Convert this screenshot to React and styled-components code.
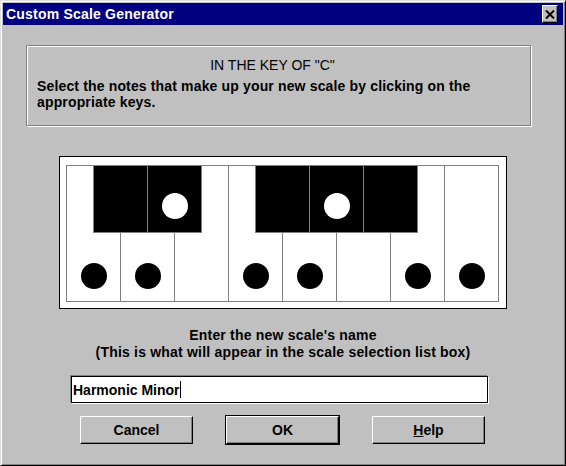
import React from 'react'
import styled, { createGlobalStyle } from 'styled-components'

const GlobalStyle = createGlobalStyle`
  html, body {
    margin: 0;
    padding: 0;
    background: #c0c0c0;
  }
  body {
    font-family: "Liberation Sans", Arial, sans-serif;
  }
`

const Window = styled.div`
  width: 566px;
  height: 466px;
  box-sizing: border-box;
  background: #c0c0c0;
  border: 1px solid;
  border-color: #dfdfdf #000 #000 #dfdfdf;
  box-shadow: inset 1px 1px #fff, inset -1px -1px #808080;
  padding: 2px;
  display: flex;
  flex-direction: column;
`

const TitleBar = styled.div`
  height: 22px;
  background: #000080;
  display: flex;
  align-items: center;
  justify-content: space-between;
  padding: 0 5px 0 3px;
`

const Title = styled.span`
  color: #fff;
  font-weight: bold;
  font-size: 14px;
  letter-spacing: 0.2px;
`

const CloseButton = styled.div`
  width: 16px;
  height: 18px;
  box-sizing: border-box;
  background: #c0c0c0;
  border: 1px solid;
  border-color: #fff #000 #000 #fff;
  box-shadow: inset -1px -1px #808080;
  display: flex;
  align-items: center;
  justify-content: center;
`

const Body = styled.div`
  display: flex;
  flex-direction: column;
  align-items: flex-start;
`

const InfoPanel = styled.div`
  margin: 20px 0 0 23px;
  width: 505px;
  height: 81px;
  box-sizing: border-box;
  border: 1px solid #808080;
  box-shadow: 1px 1px 0 #fff, inset 1px 1px 0 #fff;
  padding: 11px 10px 0;
  font-size: 14px;
  line-height: 16px;
  color: #000;
`

const PanelHeading = styled.div`
  text-align: center;
  margin: 0 12px 5px 0;
`

const PanelText = styled.div`
  font-weight: bold;
  letter-spacing: 0.15px;
`

const KeyboardFrame = styled.div`
  margin: 30px 0 0 56px;
  width: 448px;
  height: 153px;
  box-sizing: border-box;
  border: 1px solid #000;
  background: #fff;
  padding: 8px 0 0 6px;
`

const Keyboard = styled.div`
  position: relative;
  width: 433px;
  height: 137px;
  box-sizing: border-box;
  border: 1px solid #808080;
  background: #808080;
  display: grid;
  grid-template-columns: repeat(8, 1fr);
  gap: 1px;
`

const WhiteKey = styled.div`
  background: #fff;
  display: flex;
  align-items: flex-end;
  justify-content: center;
  padding-bottom: 12px;
`

const BlackKey = styled.div`
  position: absolute;
  top: -1px;
  width: 55px;
  height: 68px;
  box-sizing: border-box;
  background: #000;
  border: 1px solid #808080;
  display: flex;
  align-items: flex-end;
  justify-content: center;
  padding-bottom: 13px;
`

const Dot = styled.div`
  width: 26px;
  height: 26px;
  border-radius: 50%;
  background: ${(p) => (p.$light ? '#fff' : '#000')};
`

const Prompt = styled.div`
  align-self: center;
  margin-top: 18px;
  text-align: center;
  font-weight: bold;
  font-size: 14px;
  line-height: 17px;
  letter-spacing: 0.2px;
`

const NameField = styled.div`
  margin: 15px 0 0 68px;
  width: 417px;
  height: 27px;
  box-sizing: border-box;
  background: #fff;
  border: 1px solid #000;
  box-shadow: -1px -1px 0 #808080, 1px 1px 0 #fff;
  display: flex;
  align-items: center;
  padding-left: 1px;
  font-weight: bold;
  font-size: 14px;
`

const Caret = styled.span`
  display: inline-block;
  width: 1px;
  height: 17px;
  background: #000;
`

const ButtonRow = styled.div`
  margin: 13px 0 0 77px;
  display: flex;
  gap: 33px;
`

const Button = styled.div`
  width: 113px;
  height: 28px;
  box-sizing: border-box;
  background: #c0c0c0;
  border: 1px solid;
  border-color: #fff #000 #000 #fff;
  box-shadow: ${(p) =>
    p.$default
      ? 'inset -1px -1px #808080, 0 0 0 1px #000'
      : 'inset -1px -1px #808080'};
  display: flex;
  align-items: center;
  justify-content: center;
  font-weight: bold;
  font-size: 14px;
  u {
    text-decoration: underline;
  }
`

const whiteDots = [true, true, false, true, true, false, true, true]
const blackKeys = [
  { pos: 0, note: false },
  { pos: 1, note: true },
  { pos: 3, note: false },
  { pos: 4, note: true },
  { pos: 5, note: false },
]

export default function App() {
  return (
    <>
      <GlobalStyle />
      <Window>
        <TitleBar>
          <Title>Custom Scale Generator</Title>
          <CloseButton>
            <svg width="10" height="9" viewBox="0 0 10 9">
              <path d="M1 0.5 L9 8.5 M9 0.5 L1 8.5" stroke="#000" strokeWidth="2" />
            </svg>
          </CloseButton>
        </TitleBar>
        <Body>
          <InfoPanel>
            <PanelHeading>IN THE KEY OF "C"</PanelHeading>
            <PanelText>
              Select the notes that make up your new scale by clicking on the
              appropriate keys.
            </PanelText>
          </InfoPanel>
          <KeyboardFrame>
            <Keyboard>
              {whiteDots.map((on, i) => (
                <WhiteKey key={i}>{on && <Dot />}</WhiteKey>
              ))}
              {blackKeys.map((k) => (
                <BlackKey key={k.pos} style={{ left: 26 + 54 * k.pos }}>
                  {k.note && <Dot $light />}
                </BlackKey>
              ))}
            </Keyboard>
          </KeyboardFrame>
          <Prompt>
            Enter the new scale's name
            <br />
            (This is what will appear in the scale selection list box)
          </Prompt>
          <NameField>
            Harmonic Minor
            <Caret />
          </NameField>
          <ButtonRow>
            <Button>Cancel</Button>
            <Button $default>OK</Button>
            <Button>
              <u>H</u>elp
            </Button>
          </ButtonRow>
        </Body>
      </Window>
    </>
  )
}
